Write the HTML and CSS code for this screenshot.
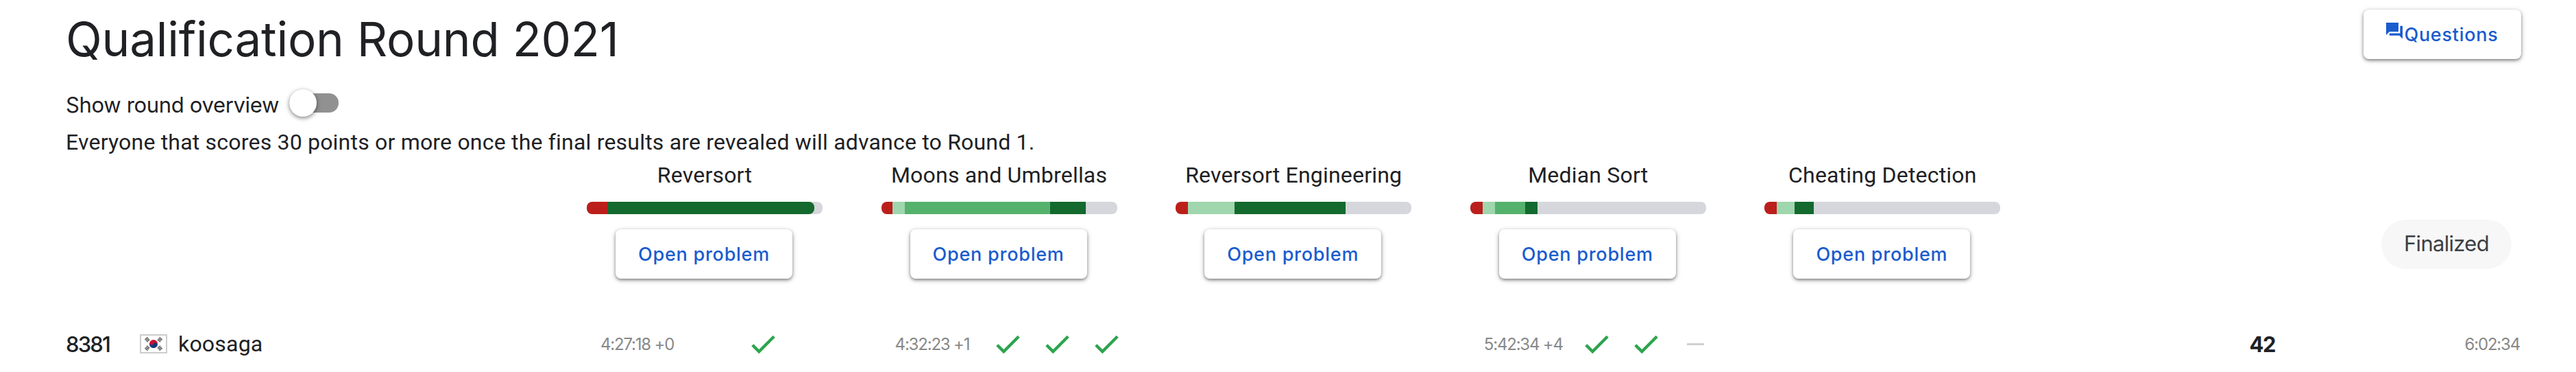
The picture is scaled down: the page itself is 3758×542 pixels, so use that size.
FILE: index.html
```
<!DOCTYPE html>
<html lang="en">
<head>
    <meta charset="UTF-8">
    <meta name="viewport" content="width=device-width, initial-scale=1.0">
    <title>Qualification Round 2021</title>
    <link rel="stylesheet" href="styles.css">
</head>
<body>

<svg class="symbols" aria-hidden="true">
    <symbol id="check" viewBox="0 0 35 27">
        <path d="M1.8 14.8L11.3 24.2L33.2 2.2" fill="none" stroke="#2da44e" stroke-width="4.4"/>
    </symbol>
</svg>

<div class="page">
    <header class="header">
        <h1 class="title">Qualification Round 2021</h1>
        <button class="button questions">
            <svg class="questions-icon" viewBox="2 2 20 20"><path fill="currentColor" d="M21.6 6H19v9H6v2.6h12L22 21.6V6zM17 13V2H2v15l4-4z"/></svg>Questions
        </button>
    </header>

    <div class="overview">
        <span class="overview-label">Show round overview</span>
        <span class="switch"><span class="thumb"></span></span>
    </div>

    <p class="notice">Everyone that scores 30 points or more once the final results are revealed will advance to Round 1.</p>

    <div class="board problems">
        <div class="problem">
            <div class="name">Reversort</div>
            <div class="bar">
                <span class="wrong" style="width: 30px"></span>
                <span class="full last" style="width: 302px"></span>
            </div>
            <button class="button">Open problem</button>
        </div>
        <div class="problem">
            <div class="name">Moons and Umbrellas</div>
            <div class="bar">
                <span class="wrong" style="width: 16px"></span>
                <span class="low" style="width: 18px"></span>
                <span class="mid" style="width: 212px"></span>
                <span class="full" style="width: 52px"></span>
            </div>
            <button class="button">Open problem</button>
        </div>
        <div class="problem">
            <div class="name">Reversort Engineering</div>
            <div class="bar">
                <span class="wrong" style="width: 18px"></span>
                <span class="low" style="width: 68px"></span>
                <span class="full" style="width: 162px"></span>
            </div>
            <button class="button">Open problem</button>
        </div>
        <div class="problem">
            <div class="name">Median Sort</div>
            <div class="bar">
                <span class="wrong" style="width: 18px"></span>
                <span class="low" style="width: 18px"></span>
                <span class="mid" style="width: 44px"></span>
                <span class="full" style="width: 18px"></span>
            </div>
            <button class="button">Open problem</button>
        </div>
        <div class="problem">
            <div class="name">Cheating Detection</div>
            <div class="bar">
                <span class="wrong" style="width: 18px"></span>
                <span class="low" style="width: 26px"></span>
                <span class="full" style="width: 28px"></span>
            </div>
            <button class="button">Open problem</button>
        </div>
        <div class="status"><span class="pill">Finalized</span></div>
    </div>

    <div class="board row">
        <div class="player">
            <span class="rank">8381</span>
            <svg class="flag" viewBox="0 0 40 28">
                <rect x="1" y="1" width="38" height="26" fill="#fff" stroke="#ccc" stroke-width="2"/>
                <g stroke="#666" stroke-width="5.5" stroke-dasharray="1.6 .5">
                    <path d="M9 5.5l4 5M31 5.5l-4 5M9 22.5l4-5M31 22.5l-4-5"/>
                </g>
                <circle cx="20" cy="14" r="6" fill="#c8102e"/>
                <path d="M14.8 11a3 3 0 0 0 5.2 3a3 3 0 0 1 5.2 3A6 6 0 0 1 14.800 11z" fill="#0a3a82"/>
            </svg>
            <span class="handle">koosaga</span>
        </div>
        <div class="result">
            <span class="time">4:27:18 +0</span>
            <span class="sets">
                <svg class="check"><use href="#check"/></svg>
            </span>
        </div>
        <div class="result">
            <span class="time">4:32:23 +1</span>
            <span class="sets">
                <svg class="check"><use href="#check"/></svg>
                <svg class="check"><use href="#check"/></svg>
                <svg class="check"><use href="#check"/></svg>
            </span>
        </div>
        <div class="result"></div>
        <div class="result">
            <span class="time">5:42:34 +4</span>
            <span class="sets">
                <svg class="check"><use href="#check"/></svg>
                <svg class="check"><use href="#check"/></svg>
                <span class="dash"></span>
            </span>
        </div>
        <div class="result"></div>
        <div class="total">
            <span class="score">42</span>
            <span class="time">6:02:34</span>
        </div>
    </div>
</div>

</body>
</html>
```
FILE: styles.css
```
body {
    margin: 0;
    background-color: white;
    color: #202124;
    font-family: Roboto, sans-serif;
    font-size: 32px;
    letter-spacing: 0.2px;
}

.symbols {
    display: none;
}

.page {
    padding: 0 80px 0 96px;
}

.header {
    display: flex;
    justify-content: space-between;
    align-items: flex-start;
    height: 114px;
}

.title {
    margin: 0;
    font-family: Inter, sans-serif;
    font-size: 69px;
    font-weight: 400;
    line-height: 114px;
    letter-spacing: -0.2px;
}

.button {
    display: flex;
    justify-content: center;
    align-items: center;
    width: 258px;
    height: 72px;
    padding: 0;
    border: none;
    border-radius: 8px;
    background-color: white;
    box-shadow: 0 2px 4px rgba(0, 0, 0, 0.4), 0 2px 8px rgba(0, 0, 0, 0.2);
    color: #1a5cce;
    font-family: Inter, sans-serif;
    font-size: 27px;
    font-weight: 500;
    letter-spacing: 0.75px;
    cursor: pointer;
}

.problem .button {
    margin-right: 2px;
}

.questions {
    width: 230px;
    margin-top: 14px;
}

.questions-icon {
    width: 24px;
    height: 24px;
    margin: 0 2px 10px 0;
}

.overview {
    display: flex;
    align-items: center;
    gap: 15px;
    height: 76px;
}

.overview-label {
    font-family: Inter, sans-serif;
    font-size: 31px;
    letter-spacing: -0.33px;
}

.switch {
    display: flex;
    align-items: center;
    width: 72px;
    height: 28px;
    margin-bottom: 4px;
    border-radius: 14px;
    background-color: #919191;
}

.thumb {
    width: 40px;
    height: 40px;
    border-radius: 50%;
    background-color: white;
    box-shadow: 0 2px 6px rgba(0, 0, 0, 0.5);
}

.notice {
    margin: 0;
    line-height: 34px;
}

.board {
    display: grid;
    grid-template-columns: 760px repeat(5, 429.6px) 1fr;
}

.problems {
    padding-top: 11px;
}

.problem {
    display: flex;
    flex-direction: column;
    align-items: center;
    width: 344px;
}

.problem:first-child {
    grid-column: 2;
}

.name {
    line-height: 40px;
    white-space: nowrap;
}

.bar {
    display: flex;
    width: 344px;
    height: 18px;
    margin: 19px 0 22px;
    border-radius: 8px;
    background-color: #d6d7dc;
    overflow: hidden;
}

.wrong {
    background-color: #bb1f1b;
}

.low {
    background-color: #9fd6ae;
}

.mid {
    background-color: #54b26c;
}

.full {
    background-color: #14692e;
}

.last {
    border-radius: 0 8px 8px 0;
}

.status {
    display: flex;
    justify-content: flex-end;
    align-items: flex-start;
    padding: 85px 14px 0 0;
}

.pill {
    width: 190px;
    height: 72px;
    border-radius: 36px;
    background-color: #f7f7f7;
    color: #3c4043;
    font-family: Inter, sans-serif;
    font-size: 31px;
    letter-spacing: -0.7px;
    line-height: 70px;
    text-align: center;
}

.row {
    align-items: center;
    height: 48px;
    margin-top: 71px;
}

.player {
    display: flex;
    align-items: center;
}

.rank {
    width: 108px;
    font-family: Inter, sans-serif;
    font-size: 31px;
    font-weight: 500;
    letter-spacing: -1.8px;
}

.flag {
    width: 40px;
    height: 28px;
    margin-right: 16px;
}

.result {
    display: flex;
    align-items: center;
    justify-content: space-between;
    width: 345px;
    padding-left: 20px;
}

.time {
    color: #888;
    font-family: Inter, sans-serif;
    font-size: 24px;
    letter-spacing: -1.2px;
    white-space: nowrap;
}

.sets {
    display: flex;
    justify-content: center;
    align-items: center;
    gap: 37px;
    width: 216px;
    flex-shrink: 0;
}

.check {
    width: 35px;
    height: 27px;
}

.dash {
    width: 25px;
    height: 3px;
    margin: 0 5px;
    background-color: #d0d0d0;
}

.total {
    display: flex;
    justify-content: space-between;
    align-items: center;
}

.total .time {
    padding-right: 2px;
}

.score {
    width: 315px;
    font-family: Inter, sans-serif;
    font-size: 31px;
    font-weight: 700;
    letter-spacing: -1.5px;
    text-align: right;
}
```
